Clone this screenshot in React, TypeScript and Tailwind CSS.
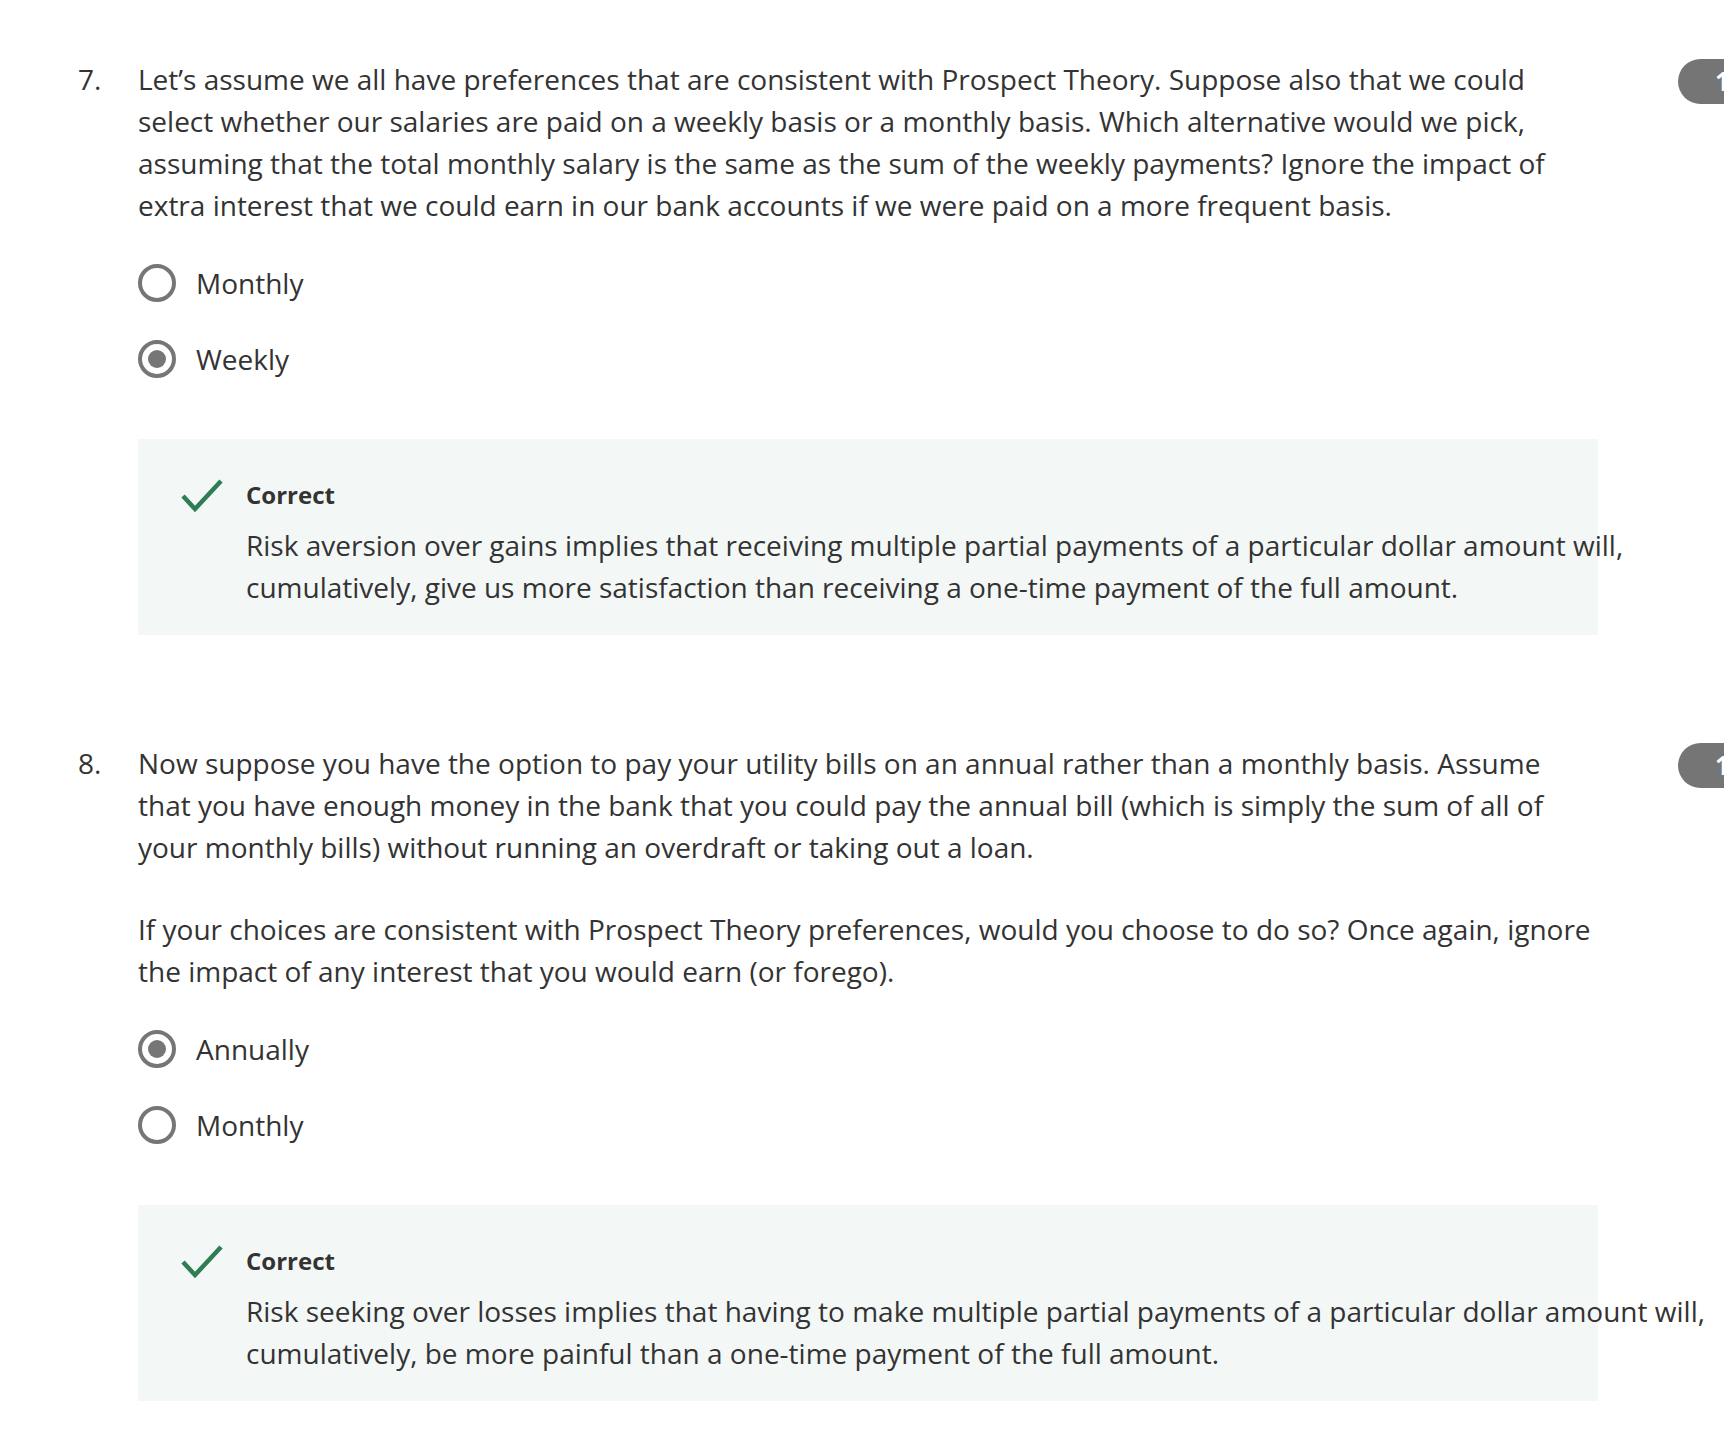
import React from "react";

type Option = { label: string; checked: boolean };

type Question = {
  num: string;
  paragraphs: string[];
  options: Option[];
  explanation: string;
};

const questions: Question[] = [
  {
    num: "7.",
    paragraphs: [
      "Let’s assume we all have preferences that are consistent with Prospect Theory. Suppose also that we could select whether our salaries are paid on a weekly basis or a monthly basis. Which alternative would we pick, assuming that the total monthly salary is the same as the sum of the weekly payments? Ignore the impact of extra interest that we could earn in our bank accounts if we were paid on a more frequent basis.",
    ],
    options: [
      { label: "Monthly", checked: false },
      { label: "Weekly", checked: true },
    ],
    explanation:
      "Risk aversion over gains implies that receiving multiple partial payments of a particular dollar amount will, cumulatively, give us more satisfaction than receiving a one-time payment of the full amount.",
  },
  {
    num: "8.",
    paragraphs: [
      "Now suppose you have the option to pay your utility bills on an annual rather than a monthly basis. Assume that you have enough money in the bank that you could pay the annual bill (which is simply the sum of all of your monthly bills) without running an overdraft or taking out a loan.",
      "If your choices are consistent with Prospect Theory preferences, would you choose to do so? Once again, ignore the impact of any interest that you would earn (or forego).",
    ],
    options: [
      { label: "Annually", checked: true },
      { label: "Monthly", checked: false },
    ],
    explanation:
      "Risk seeking over losses implies that having to make multiple partial payments of a particular dollar amount will, cumulatively, be more painful than a one-time payment of the full amount.",
  },
];

function Radio({ checked }: { checked: boolean }) {
  return (
    <span className="flex h-[38px] w-[38px] items-center justify-center rounded-full border-[4px] border-[#767676] bg-white">
      {checked && <span className="h-[18px] w-[18px] rounded-full bg-[#767676]" />}
    </span>
  );
}

function Check() {
  return (
    <svg width="42" height="34" viewBox="0 0 42 34" className="shrink-0">
      <polyline
        points="2,17 14,30 40,2"
        fill="none"
        stroke="#2e7d55"
        strokeWidth="4.5"
      />
    </svg>
  );
}

function QuestionBlock({ q }: { q: Question }) {
  return (
    <div className="relative flex">
      <div className="w-[60px] shrink-0 leading-[42px]">{q.num}</div>
      <div className="w-[1460px]">
        <div className="w-[1457px] space-y-[40px]">
          {q.paragraphs.map((p, i) => (
            <p key={i} className="leading-[42px]">
              {p}
            </p>
          ))}
        </div>
        <div className="mt-[19px]">
          {q.options.map((o) => (
            <label key={o.label} className="flex h-[76px] items-center">
              <Radio checked={o.checked} />
              <span className="ml-[20px] leading-[42px]">{o.label}</span>
            </label>
          ))}
        </div>
        <div className="mt-[42px] h-[196px] bg-[#f3f8f7] pl-[43px] pt-[35px]">
          <div className="flex">
            <div className="mt-[5px] w-[65px] shrink-0">
              <Check />
            </div>
            <div>
              <div className="text-[24px] font-bold leading-[42px] text-[#333]">Correct</div>
              <p className="mt-[8px] w-[1480px] leading-[42px]">{q.explanation}</p>
            </div>
          </div>
        </div>
      </div>
      <div className="absolute left-[1600px] top-[1px] flex h-[45px] w-[80px] items-center rounded-full bg-[#757575] pl-[37px] text-[26px] font-bold text-white">
        1
      </div>
    </div>
  );
}

export default function App() {
  return (
    <div
      className="h-[1442px] w-[1724px] overflow-hidden bg-white pl-[78px] pt-[58px] text-[28px] text-[#333]"
      style={{ fontFamily: '"Open Sans", sans-serif' }}
    >
      <div className="space-y-[107px]">
        {questions.map((q) => (
          <QuestionBlock key={q.num} q={q} />
        ))}
      </div>
    </div>
  );
}
